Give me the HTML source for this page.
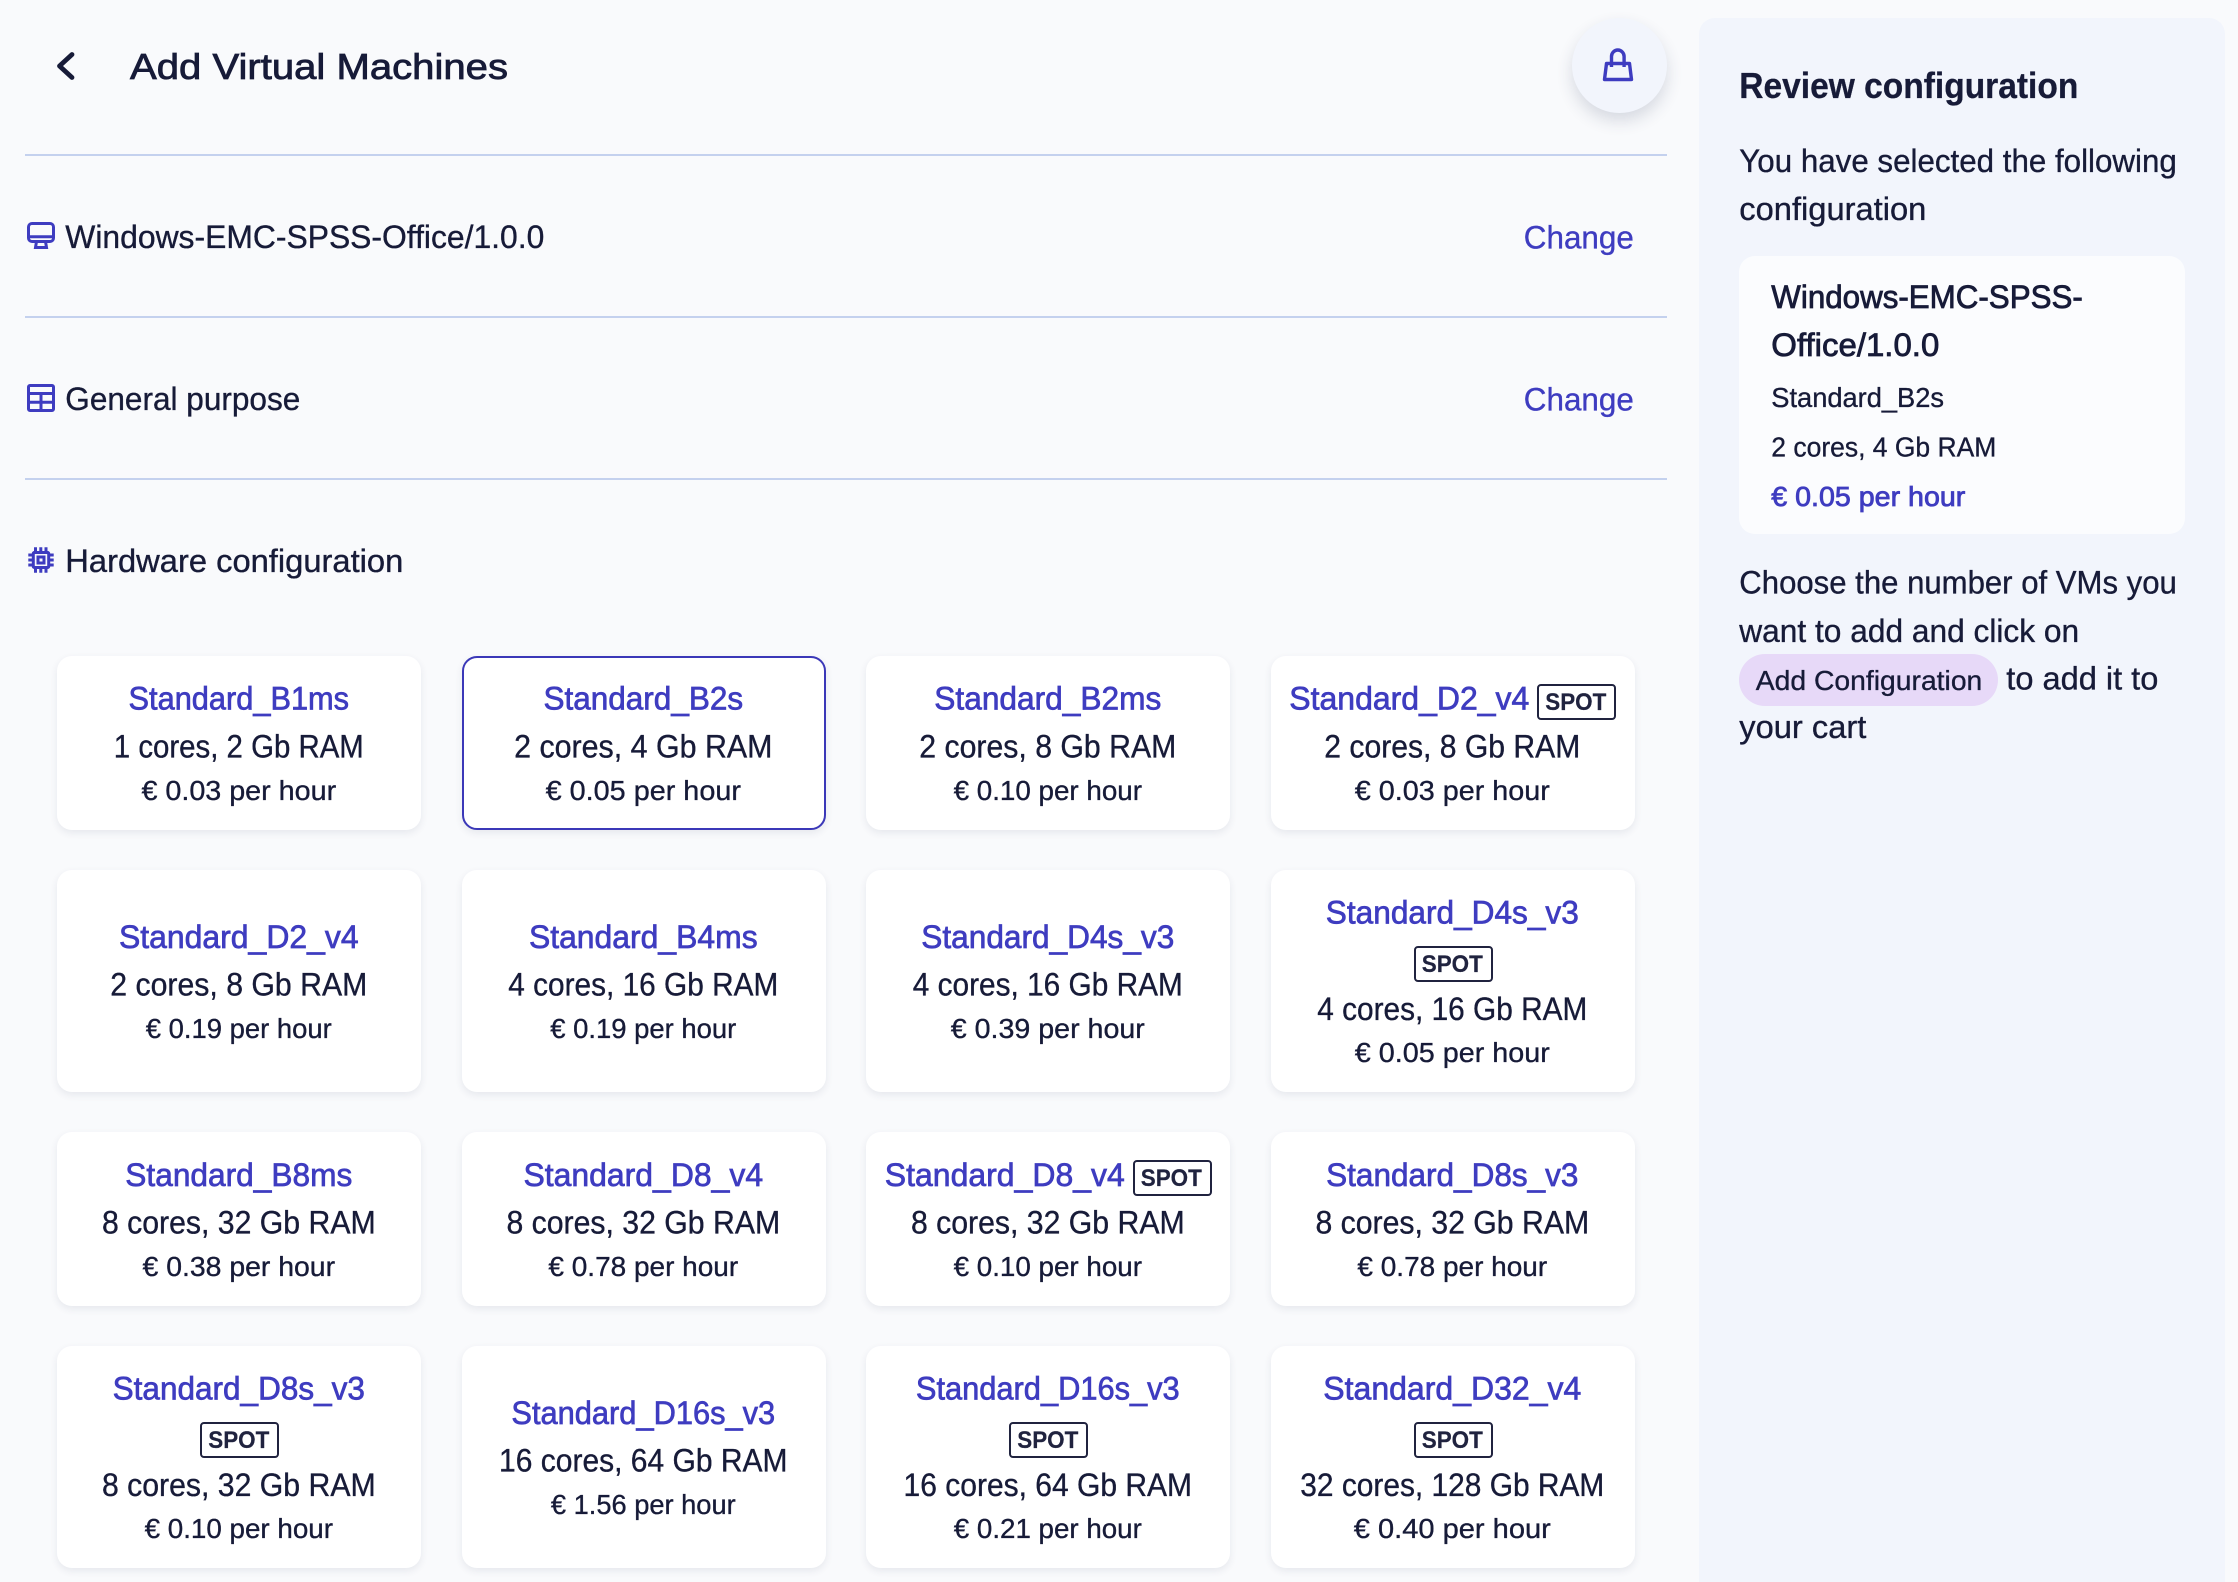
<!DOCTYPE html>
<html lang="en">
<head>
<meta charset="utf-8">
<title>Add Virtual Machines</title>
<style>
html,body{margin:0;padding:0;width:2238px;height:1582px;overflow:hidden;background:#f9fafc}
body{position:relative;font-family:"Liberation Sans",sans-serif}
.b{position:absolute;box-sizing:border-box}
.hr{left:25px;width:1642px;height:2px;background:#c4d1ee}
.c{width:364px;background:#fff;border-radius:15px;box-shadow:0 3px 8px rgba(40,50,90,.09)}
.sel{border:2.5px solid #3b38b8}
svg.t{position:absolute;left:0;top:0}
text{font-family:"Liberation Sans",sans-serif;fill:#171b38;stroke:#171b38;stroke-width:.35px;text-anchor:middle}
.l{text-anchor:start}
.a{fill:#3e3cc0;stroke:#3e3cc0}
.m{stroke-width:.8px}
.f36{font-size:36px}.f32{font-size:32px}.f28{font-size:28px}
.s{font-size:24px;font-weight:bold;stroke-width:.2px;fill:#20233f;stroke:#20233f}
.ti{font-size:32px;fill:#3e3cc0;stroke:#3e3cc0;stroke-width:.7px}
.co{font-size:32px}
.p{font-size:28px}
.sp{position:absolute;box-sizing:border-box;width:79px;height:36px;border:2.5px solid #20233f;border-radius:4px}
</style>
</head>
<body>
<div class="b" style="left:1699px;top:18px;width:526px;height:1564px;background:#f2f5fc;border-radius:16px 16px 0 0"></div>
<div class="b" style="left:1571.5px;top:18px;width:95px;height:95px;border-radius:50%;background:#f2f5fc;box-shadow:0 8px 16px rgba(40,50,90,.16)"></div>
<div class="b hr" style="top:154px"></div>
<div class="b hr" style="top:316px"></div>
<div class="b hr" style="top:478px"></div>
<div class="b" style="left:1739px;top:256px;width:446px;height:278px;border-radius:16px;background:#fbfcfe"></div>
<div class="b" style="left:1739px;top:654px;width:259px;height:51.5px;border-radius:26px;background:#e7d9f8"></div>

<div class="b c" style="left:57px;top:656px;height:174px"></div>
<div class="b c sel" style="left:462px;top:656px;height:174px"></div>
<div class="b c" style="left:866px;top:656px;height:174px"></div>
<div class="b c" style="left:1271px;top:656px;height:174px"></div>
<div class="b c" style="left:57px;top:870px;height:222px"></div>
<div class="b c" style="left:461.5px;top:870px;height:222px"></div>
<div class="b c" style="left:866px;top:870px;height:222px"></div>
<div class="b c" style="left:1271px;top:870px;height:222px"></div>
<div class="b c" style="left:57px;top:1132px;height:174px"></div>
<div class="b c" style="left:461.5px;top:1132px;height:174px"></div>
<div class="b c" style="left:866px;top:1132px;height:174px"></div>
<div class="b c" style="left:1271px;top:1132px;height:174px"></div>
<div class="b c" style="left:57px;top:1346px;height:222px"></div>
<div class="b c" style="left:461.5px;top:1346px;height:222px"></div>
<div class="b c" style="left:866px;top:1346px;height:222px"></div>
<div class="b c" style="left:1271px;top:1346px;height:222px"></div>

<div class="sp" style="left:1537px;top:684px"></div>
<div class="sp" style="left:1413.5px;top:946px"></div>
<div class="sp" style="left:1132.5px;top:1160px"></div>
<div class="sp" style="left:200px;top:1422px"></div>
<div class="sp" style="left:1009px;top:1422px"></div>
<div class="sp" style="left:1413.5px;top:1422px"></div>

<svg class="t" width="2238" height="1582" viewBox="0 0 2238 1582" xmlns="http://www.w3.org/2000/svg">
<!-- header -->
<path d="M72 54.5 59.5 66 72 77.5" fill="none" stroke="#171b38" stroke-width="4.8" stroke-linecap="round" stroke-linejoin="round"/>
<text class="l f36 m" x="130" y="79" textLength="378" lengthAdjust="spacingAndGlyphs">Add Virtual Machines</text>
<g fill="none" stroke="#3e3cc0" stroke-width="3.4">
<path d="M1606.5 63.5H1629.5L1631.5 79.5H1604.5Z" stroke-linejoin="round"/>
<path d="M1611.5 67V56.5a6.3 6.5 0 0 1 12.6 0V67"/>
</g>
<!-- section icons -->
<g fill="none" stroke="#3e3cc0" stroke-width="3">
<rect x="28.5" y="223.5" width="25" height="18" rx="3.5"/>
<path d="M28.5 236.8H53.5"/>
<path d="M36.5 241.5 35.5 247.5H46.5L45.5 241.5"/>
<rect x="28.5" y="385.5" width="25" height="25" rx="1.5"/>
<path d="M28.5 393.5H53.5M28.5 402.3H53.5M41 393.5V410.5"/>
<rect x="33.3" y="552.5" width="15.4" height="15" rx="1"/>
<rect x="38" y="557" width="6" height="6"/>
<path d="M35.5 547.3V552M40.8 547.3V552M46 547.3V552M35.5 568V572.7M40.8 568V572.7M46 568V572.7M28.3 555H33M28.3 560H33M28.3 565H33M49 555H53.7M49 560H53.7M49 565H53.7"/>
</g>
<g transform="translate(-.7 0)">
<!-- section labels -->
<text class="l f32" x="66" y="248" textLength="479" lengthAdjust="spacingAndGlyphs">Windows-EMC-SPSS-Office/1.0.0</text>
<text class="l f32" x="66" y="410" textLength="235" lengthAdjust="spacingAndGlyphs">General purpose</text>
<text class="l f32" x="66" y="572" textLength="338" lengthAdjust="spacingAndGlyphs">Hardware configuration</text>
<text class="l f32 a" x="1524.5" y="248.5" textLength="110" lengthAdjust="spacingAndGlyphs">Change</text>
<text class="l f32 a" x="1524.5" y="410.5" textLength="110" lengthAdjust="spacingAndGlyphs">Change</text>
<!-- sidebar -->
<text class="l f36" font-weight="bold" style="stroke-width:.3px" x="1740" y="98" textLength="339" lengthAdjust="spacingAndGlyphs">Review configuration</text>
<text class="l f32" x="1740" y="172" textLength="437.5" lengthAdjust="spacingAndGlyphs">You have selected the following</text>
<text class="l f32" x="1740" y="220" textLength="187" lengthAdjust="spacingAndGlyphs">configuration</text>
<text class="l f32 m" x="1772" y="308" textLength="311.5" lengthAdjust="spacingAndGlyphs">Windows-EMC-SPSS-</text>
<text class="l f32 m" x="1772" y="356" textLength="168" lengthAdjust="spacingAndGlyphs">Office/1.0.0</text>
<text class="l f28" x="1772" y="407" textLength="172.7" lengthAdjust="spacingAndGlyphs">Standard_B2s</text>
<text class="l f28" x="1772" y="456.7" textLength="225" lengthAdjust="spacingAndGlyphs">2 cores, 4 Gb RAM</text>
<text class="l f28 a m" x="1772" y="506" textLength="194" lengthAdjust="spacingAndGlyphs">€ 0.05 per hour</text>
<text class="l f32" x="1740" y="593.5" textLength="437.5" lengthAdjust="spacingAndGlyphs">Choose the number of VMs you</text>
<text class="l f32" x="1740" y="641.8" textLength="339.8" lengthAdjust="spacingAndGlyphs">want to add and click on</text>
<text class="l f28" x="1756.5" y="690" textLength="226.5" lengthAdjust="spacingAndGlyphs">Add Configuration</text>
<text class="l f32" x="2007" y="689.5" textLength="152" lengthAdjust="spacingAndGlyphs">to add it to</text>
<text class="l f32" x="1740" y="738" textLength="127" lengthAdjust="spacingAndGlyphs">your cart</text>

<!-- row 1 -->
<text class="ti" x="239.5" y="709.5" textLength="220.5" lengthAdjust="spacingAndGlyphs">Standard_B1ms</text>
<text class="co" x="239.5" y="757.7" textLength="250" lengthAdjust="spacingAndGlyphs">1 cores, 2 Gb RAM</text>
<text class="p" x="239.5" y="800" textLength="194.7" lengthAdjust="spacingAndGlyphs">€ 0.03 per hour</text>
<text class="ti" x="644" y="709.5" textLength="199.7" lengthAdjust="spacingAndGlyphs">Standard_B2s</text>
<text class="co" x="644" y="757.7" textLength="258.4" lengthAdjust="spacingAndGlyphs">2 cores, 4 Gb RAM</text>
<text class="p" x="644" y="800" textLength="195.3" lengthAdjust="spacingAndGlyphs">€ 0.05 per hour</text>
<text class="ti" x="1048.5" y="709.5" textLength="227" lengthAdjust="spacingAndGlyphs">Standard_B2ms</text>
<text class="co" x="1048.5" y="757.7" textLength="257" lengthAdjust="spacingAndGlyphs">2 cores, 8 Gb RAM</text>
<text class="p" x="1048.5" y="800" textLength="188.4" lengthAdjust="spacingAndGlyphs">€ 0.10 per hour</text>
<text class="ti" x="1410" y="709.5" textLength="240" lengthAdjust="spacingAndGlyphs">Standard_D2_v4</text>
<text class="s" x="1576.5" y="710" textLength="61" lengthAdjust="spacingAndGlyphs">SPOT</text>
<text class="co" x="1453" y="757.7" textLength="256" lengthAdjust="spacingAndGlyphs">2 cores, 8 Gb RAM</text>
<text class="p" x="1453" y="800" textLength="195" lengthAdjust="spacingAndGlyphs">€ 0.03 per hour</text>

<!-- row 2 -->
<text class="ti" x="239.5" y="948" textLength="239.7" lengthAdjust="spacingAndGlyphs">Standard_D2_v4</text>
<text class="co" x="239.5" y="995.7" textLength="257" lengthAdjust="spacingAndGlyphs">2 cores, 8 Gb RAM</text>
<text class="p" x="239.5" y="1038" textLength="186" lengthAdjust="spacingAndGlyphs">€ 0.19 per hour</text>
<text class="ti" x="644" y="948" textLength="228.7" lengthAdjust="spacingAndGlyphs">Standard_B4ms</text>
<text class="co" x="644" y="995.7" textLength="270" lengthAdjust="spacingAndGlyphs">4 cores, 16 Gb RAM</text>
<text class="p" x="644" y="1038" textLength="186" lengthAdjust="spacingAndGlyphs">€ 0.19 per hour</text>
<text class="ti" x="1048.5" y="948" textLength="253" lengthAdjust="spacingAndGlyphs">Standard_D4s_v3</text>
<text class="co" x="1048.5" y="995.7" textLength="270" lengthAdjust="spacingAndGlyphs">4 cores, 16 Gb RAM</text>
<text class="p" x="1048.5" y="1038" textLength="194" lengthAdjust="spacingAndGlyphs">€ 0.39 per hour</text>
<text class="ti" x="1453" y="923.5" textLength="253" lengthAdjust="spacingAndGlyphs">Standard_D4s_v3</text>
<text class="s" x="1453" y="972" textLength="61" lengthAdjust="spacingAndGlyphs">SPOT</text>
<text class="co" x="1453" y="1020" textLength="270" lengthAdjust="spacingAndGlyphs">4 cores, 16 Gb RAM</text>
<text class="p" x="1453" y="1062" textLength="195" lengthAdjust="spacingAndGlyphs">€ 0.05 per hour</text>

<!-- row 3 -->
<text class="ti" x="239.5" y="1186" textLength="227" lengthAdjust="spacingAndGlyphs">Standard_B8ms</text>
<text class="co" x="239.5" y="1233.7" textLength="273.7" lengthAdjust="spacingAndGlyphs">8 cores, 32 Gb RAM</text>
<text class="p" x="239.5" y="1276" textLength="192.5" lengthAdjust="spacingAndGlyphs">€ 0.38 per hour</text>
<text class="ti" x="644" y="1186" textLength="239.7" lengthAdjust="spacingAndGlyphs">Standard_D8_v4</text>
<text class="co" x="644" y="1233.7" textLength="273.7" lengthAdjust="spacingAndGlyphs">8 cores, 32 Gb RAM</text>
<text class="p" x="644" y="1276" textLength="189.8" lengthAdjust="spacingAndGlyphs">€ 0.78 per hour</text>
<text class="ti" x="1005.5" y="1186" textLength="240" lengthAdjust="spacingAndGlyphs">Standard_D8_v4</text>
<text class="s" x="1172" y="1186" textLength="61" lengthAdjust="spacingAndGlyphs">SPOT</text>
<text class="co" x="1048.5" y="1233.7" textLength="273.7" lengthAdjust="spacingAndGlyphs">8 cores, 32 Gb RAM</text>
<text class="p" x="1048.5" y="1276" textLength="188.4" lengthAdjust="spacingAndGlyphs">€ 0.10 per hour</text>
<text class="ti" x="1453" y="1186" textLength="252.3" lengthAdjust="spacingAndGlyphs">Standard_D8s_v3</text>
<text class="co" x="1453" y="1233.7" textLength="273.7" lengthAdjust="spacingAndGlyphs">8 cores, 32 Gb RAM</text>
<text class="p" x="1453" y="1276" textLength="189.8" lengthAdjust="spacingAndGlyphs">€ 0.78 per hour</text>

<!-- row 4 -->
<text class="ti" x="239.5" y="1399.5" textLength="252.3" lengthAdjust="spacingAndGlyphs">Standard_D8s_v3</text>
<text class="s" x="239.5" y="1448" textLength="61" lengthAdjust="spacingAndGlyphs">SPOT</text>
<text class="co" x="239.5" y="1496" textLength="273.7" lengthAdjust="spacingAndGlyphs">8 cores, 32 Gb RAM</text>
<text class="p" x="239.5" y="1538" textLength="188.4" lengthAdjust="spacingAndGlyphs">€ 0.10 per hour</text>
<text class="ti" x="644" y="1424" textLength="263.8" lengthAdjust="spacingAndGlyphs">Standard_D16s_v3</text>
<text class="co" x="644" y="1471.7" textLength="288.5" lengthAdjust="spacingAndGlyphs">16 cores, 64 Gb RAM</text>
<text class="p" x="644" y="1514" textLength="184.8" lengthAdjust="spacingAndGlyphs">€ 1.56 per hour</text>
<text class="ti" x="1048.5" y="1399.5" textLength="263.8" lengthAdjust="spacingAndGlyphs">Standard_D16s_v3</text>
<text class="s" x="1048.5" y="1448" textLength="61" lengthAdjust="spacingAndGlyphs">SPOT</text>
<text class="co" x="1048.5" y="1496" textLength="288.5" lengthAdjust="spacingAndGlyphs">16 cores, 64 Gb RAM</text>
<text class="p" x="1048.5" y="1538" textLength="188" lengthAdjust="spacingAndGlyphs">€ 0.21 per hour</text>
<text class="ti" x="1453" y="1399.5" textLength="258" lengthAdjust="spacingAndGlyphs">Standard_D32_v4</text>
<text class="s" x="1453" y="1448" textLength="61" lengthAdjust="spacingAndGlyphs">SPOT</text>
<text class="co" x="1453" y="1496" textLength="304" lengthAdjust="spacingAndGlyphs">32 cores, 128 Gb RAM</text>
<text class="p" x="1453" y="1538" textLength="197" lengthAdjust="spacingAndGlyphs">€ 0.40 per hour</text>
</g>
</svg>
</body>
</html>
